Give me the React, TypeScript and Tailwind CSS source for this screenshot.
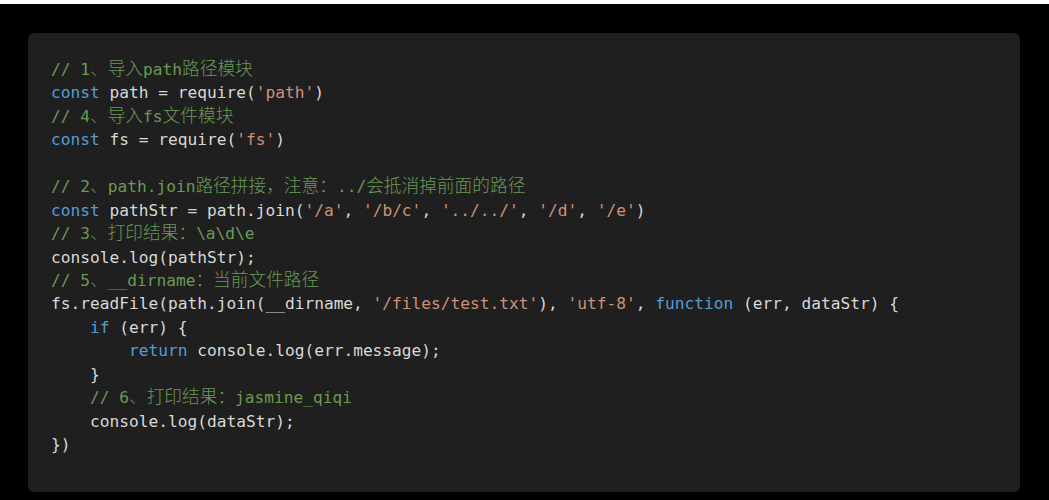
import React from "react"

type Tok = [string, string]

const C = "text-[#6a9955]"
const K = "text-[#569cd6]"
const S = "text-[#ce9178]"
const T = "text-[#d8d8d8]"

const lines: Tok[][] = [
  [[C, "// 1、导入path路径模块"]],
  [[K, "const"], [T, " path = require("], [S, "'path'"], [T, ")"]],
  [[C, "// 4、导入fs文件模块"]],
  [[K, "const"], [T, " fs = require("], [S, "'fs'"], [T, ")"]],
  [],
  [[C, "// 2、path.join路径拼接，注意：../会抵消掉前面的路径"]],
  [
    [K, "const"],
    [T, " pathStr = path.join("],
    [S, "'/a'"],
    [T, ", "],
    [S, "'/b/c'"],
    [T, ", "],
    [S, "'../../'"],
    [T, ", "],
    [S, "'/d'"],
    [T, ", "],
    [S, "'/e'"],
    [T, ")"],
  ],
  [[C, "// 3、打印结果：\\a\\d\\e"]],
  [[T, "console.log(pathStr);"]],
  [[C, "// 5、__dirname：当前文件路径"]],
  [
    [T, "fs.readFile(path.join(__dirname, "],
    [S, "'/files/test.txt'"],
    [T, "), "],
    [S, "'utf-8'"],
    [T, ", "],
    [K, "function"],
    [T, " (err, dataStr) {"],
  ],
  [[T, "    "], [K, "if"], [T, " (err) {"]],
  [[T, "        "], [K, "return"], [T, " console.log(err.message);"]],
  [[T, "    }"]],
  [[T, "    "], [C, "// 6、打印结果：jasmine_qiqi"]],
  [[T, "    console.log(dataStr);"]],
  [[T, "})"]],
]

// CJK glyphs sit a bit larger than the mono text in the shot
const Segment = ({ text }: { text: string }) => {
  const parts = text.split(/([\u3000-\u303f\u4e00-\u9fff\uff00-\uffef]+)/)
  return (
    <>
      {parts.map((p, k) =>
        /[\u3000-\u303f\u4e00-\u9fff\uff00-\uffef]/.test(p) ? (
          <span key={k} className="text-[17.7px] font-light">
            {p}
          </span>
        ) : (
          p
        )
      )}
    </>
  )
}

const App = () => {
  return (
    <div className="w-full h-[500px] bg-black border-t-4 border-white overflow-hidden">
      {/* code panel */}
      <div className="ml-[28px] mt-[29px] w-[992px] h-[459px] rounded-md bg-[#1f1f1f] pl-[23px] pt-[25px]">
        <pre
          className="text-[16.2px] leading-[23.45px] whitespace-pre"
          style={{ fontFamily: '"DejaVu Sans Mono", "Noto Sans CJK SC", monospace' }}
        >
          {lines.map((line, i) => (
            <div key={i} className="h-[23.45px]">
              {line.map(([cls, text], j) => (
                <span key={j} className={cls}>
                  <Segment text={text} />
                </span>
              ))}
            </div>
          ))}
        </pre>
      </div>
    </div>
  )
}

export default App
